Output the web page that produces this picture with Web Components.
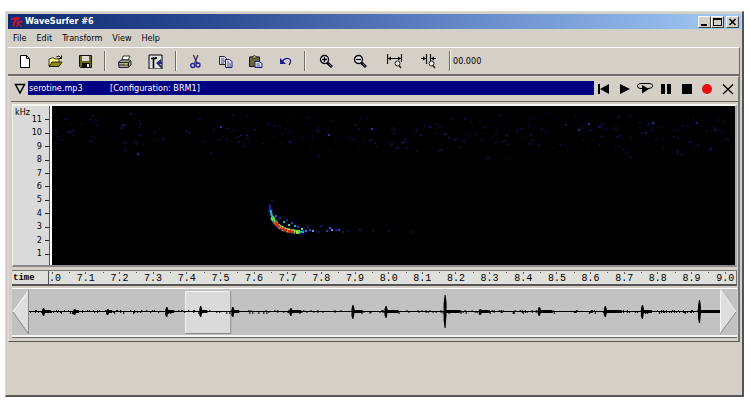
<!DOCTYPE html>
<html lang="en">
<head>
<meta charset="utf-8">
<title>WaveSurfer #6</title>
<style>
body{margin:0;background:#fff;font:9px/12px "DejaVu Sans Condensed","DejaVu Sans",sans-serif;color:#000}
</style>
</head>
<body>
<wave-window>
  <title-bar slot="title">WaveSurfer #6</title-bar>
  <menu-bar slot="menu"></menu-bar>
  <tool-bar slot="tools"></tool-bar>
  <sound-pane slot="pane">
    <transport-bar file="serotine.mp3" configuration="[Configuration: BRM1]"></transport-bar>
    <spectro-gram></spectro-gram>
    <time-ruler></time-ruler>
    <wave-overview></wave-overview>
  </sound-pane>
</wave-window>
<script>
const define = (name, html, setup) => customElements.define(name, class extends HTMLElement {
  constructor() {
    super();
    this.attachShadow({mode: "open"}).innerHTML = `<style>*{box-sizing:border-box}
      :host{display:block;box-sizing:border-box}
      button{font:inherit;color:inherit;background:none;border:0;padding:0;margin:0;display:grid;place-items:center}
      svg{display:block}</style>` + html;
  }
  connectedCallback() { if (setup) setup(this, this.shadowRoot); }
});

/* deterministic noise source, so every load draws the same data */
const random = seed => () => {
  seed = (seed * 1664525 + 1013904223) >>> 0;
  return seed / 4294967296;
};

define("wave-window", `<style>
  :host{margin:11px 6px 0 5px;min-height:calc(100vh - 18px);background:#d4d0c8;
    border:1px solid #dedbd0;border-right:2px solid #50545a;border-bottom:2px solid #585858;
    padding:2px 1px 0 2px;display:flex;flex-direction:column}
</style><slot name="title"></slot><slot name="menu"></slot><slot name="tools"></slot><slot name="pane"></slot>`);

define("title-bar", `<style>
  :host{display:flex;align-items:center;height:15px;padding:0 2px 0 3px;color:#fff;
    background:linear-gradient(90deg,#0f2a72,#2c4b92 28%,#6488c8 62%,#a3cbf5)}
  h1{font:bold 9px/15px "DejaVu Sans Condensed","DejaVu Sans",sans-serif;margin:0 auto 0 2px}
  .b{width:13px;height:12px;background:#d4d0c8;border:1px solid #fff;border-right-color:#404040;border-bottom-color:#404040;color:#000}
  .x{margin-left:2px}
</style>
<svg width="12" height="12" viewBox="0 0 12 12" fill="none" stroke="#d81028" stroke-width="1.8"><path d="M0 3.5L5.5 2Q3 6 2.5 11"/><path d="M8 1Q6 6 6 11M11.5 5L7 7.5L10.5 10.5" stroke-width="1.5"/></svg>
<h1><slot></slot></h1>
<button class="b" aria-label="Minimize"><svg width="9" height="8"><path d="M1 6h6v2H1z"/></svg></button>
<button class="b" aria-label="Maximize"><svg width="9" height="8"><path d="M0 0h9v8H0zM1 2v5h7V2z" fill-rule="evenodd"/></svg></button>
<button class="b x" aria-label="Close"><svg width="9" height="8" stroke="#000" stroke-width="1.5"><path d="M1.500 1L7.500 7M7.500 1L1.500 7"/></svg></button>`);

define("menu-bar", `<style>
  nav{display:flex;gap:10px;padding:0 5px;height:18px;align-items:center}
</style><nav><button>File</button><button>Edit</button><button>Transform</button><button>View</button><button>Help</button></nav>`);

const glass = `<path d="M8 8.500L13 13" stroke="#000" stroke-width="3"/><path d="M9.500 9.500L12.500 12.500" stroke="#55a" stroke-width="1"/><circle cx="5.500" cy="5.500" r="4" fill="#e8e8f0" stroke="#000" stroke-width="1.300"/>`;
const smallGlass = `<circle cx="10.500" cy="9.500" r="2.500" fill="#e8e8e8" stroke="#222"/><path d="M12 11.500L14 14" stroke="#222" stroke-width="1.500"/>`;
const tools = [
  ["New", 30, `<path d="M2.500 1.500h6l3 3v9h-9z" fill="#fff" stroke="#000"/><path d="M8.500 1.500v3h3" fill="none" stroke="#000"/>`],
  ["Open", 30, `<path d="M1 12V5h1l1-1h3l1 1h4v3" fill="#ff9" stroke="#3a3a00"/><path d="M1 12.500L4 8h10l-3 4.500z" fill="#8a8a10" stroke="#222200"/><path d="M8.500 3Q11 .5 13 4M13.500 1.500V4.500H10.500" fill="none" stroke="#000"/>`],
  ["Save", 30, `<path d="M1.500 1.500h12v12h-11l-1-1z" fill="#66661c" stroke="#111"/><path d="M4 2h7v5H4z" fill="#dcdcd4"/><path d="M4 9h8v4H4z" fill="#111"/><path d="M9 10h2v3H9z" fill="#ddd"/>`],
  null,
  ["Print", 31, `<path d="M5 6l1-4h7l-2 4z" fill="#fff" stroke="#333"/><path d="M1.500 8l3-2h8l1.500 1v4l-3 2.500h-9z" fill="#aaa89a" stroke="#222"/><path d="M2 8.500h9.500l2-1.500M11.500 8.500V13M2 11h9" fill="none" stroke="#222"/><path d="M8 10h2" stroke="#dd0"/>`],
  ["Configure", 31, `<path d="M1 1h13v14H1z" fill="#e0e0e0" stroke="#000"/><path d="M5.500 3v11M3 4.500h5M8 3v2" stroke="#000" stroke-width="1.600" fill="none"/><path d="M8 9l5-4v3l-2 1.500 3 2.500v3z" fill="#335"/><path d="M9 9h5" stroke="#24248a" stroke-width="2"/>`],
  null,
  ["Cut", 30, `<path d="M5.500 1L9 9.500M10 1L6.500 9.500" stroke="#335" stroke-width="1.300"/><circle cx="4.800" cy="11.500" r="2" fill="none" stroke="#1c1c98" stroke-width="1.300"/><circle cx="10" cy="11" r="2" fill="none" stroke="#1c1c98" stroke-width="1.300"/>`],
  ["Copy", 30, `<path d="M1.500 2.500h5l2 2v6h-7z" fill="#dedeea" stroke="#223"/><path d="M3 5h3M3 7h4M3 9h3" stroke="#448"/><path d="M7.500 5.500h4l2.500 2v6H7.500z" fill="#e4e4f0" stroke="#1c1c78"/><path d="M9 8h2M9 10h4M9 12h4" stroke="#448"/>`],
  ["Paste", 30, `<path d="M1.500 3h10v9.500h-10z" fill="#66663a" stroke="#111"/><path d="M4 4V2.500h1.500L6.500 1l1 1.500H9V4z" fill="#cc8" stroke="#222" stroke-width=".8"/><path d="M7 7.500h4l3 2v4H7z" fill="#e4e4f0" stroke="#1c1c78"/><path d="M8.500 10h3M8.500 12h4" stroke="#448"/>`],
  ["Undo", 30, `<path d="M4 7.500Q7 3.500 10.500 4.500Q14.500 6 11 11" fill="none" stroke="#1c1c88" stroke-width="1.300"/><path d="M2 4v6h6z" fill="#1c1c88"/>`],
  null,
  ["Zoom in", 34, glass + `<path d="M3 5.500h5M5.500 3v5" stroke="#000" stroke-width="1.300"/>`],
  ["Zoom out", 34, glass + `<path d="M3 5.500h5" stroke="#000" stroke-width="1.300"/>`],
  ["Zoom to selection", 34, `<path d="M.5 0v10M14.500 0v8M1 4.500h13" stroke="#111" stroke-width="1.200"/><path d="M1 4.500l3-2v4zM14 4.500l-3-2v4z"/>` + smallGlass],
  ["Zoom to all", 34, `<path d="M5.500 0v10M9.500 0v7M0 4.500h5M10 4.500h5" stroke="#111" stroke-width="1.200"/><path d="M5 4.500l-3-2v4zM10 4.500l3-2v4z"/>` + smallGlass],
  null
];
define("tool-bar", `<style>
  :host{display:flex;align-items:center;height:29px;margin-right:1px;padding-left:2px;
    border-top:1px solid #fff;border-right:1px solid #666;border-bottom:2px solid #706c70}
  i{width:9px;height:20px;background:linear-gradient(90deg,transparent 4px,#706c68 4px 5px,#f4f2ec 5px 6px,transparent 6px)}
  i:last-of-type{width:8px}
  button{height:24px}
</style>` + tools.map(t => t
  ? `<button style="width:${t[1]}px" aria-label="${t[0]}"><svg width="15" height="15" viewBox="0 0 15 15">${t[2]}</svg></button>`
  : `<i></i>`).join("") + `<output>00.000</output>`);

define("sound-pane", `<style>
  :host{margin:0 1px 0 0;border:1px solid #ddd9d2;border-right:2px solid #777;border-bottom:1px solid #555;padding:0 1px 4px 2px}
</style><slot></slot>`);

define("transport-bar", `<style>
  :host{display:flex;align-items:flex-start;height:25px;padding-top:2px;border-bottom:1px solid #666;margin-right:-1px}
  .name{flex:1;display:grid;grid-template-columns:81px 1fr;background:#000080;color:#fff;height:14px;line-height:14px;padding-left:1px;margin-top:2px}
  .fold{width:17px;height:20px}
  .keys{width:144px;display:grid;grid-template-columns:repeat(7,1fr);height:20px}
</style>
<button class="fold" aria-label="Fold pane"><svg width="12" height="12"><path d="M1.500 1.500h9L6 10z" fill="none" stroke="#000" stroke-width="1.500"/></svg></button>
<div class="name"><span id="f"></span><span id="c"></span></div>
<div class="keys">` + [
  ["To start", `<path d="M2 3h2v10H2zM13 3v10L4 8z"/>`],
  ["Play", `<path d="M3 3l10 5-10 5z"/>`],
  ["Loop", `<path d="M5 7.500H3Q0 7 .5 4.500Q1 2.500 4 2.500h8Q16 2.500 15.500 5.500Q15 7.500 11 7.500" fill="none" stroke="#000"/><path d="M5 4l7 4-7 4.500z"/>`],
  ["Pause", `<path d="M3 3h4v10H3zM9 3h4v10H9z"/>`],
  ["Stop", `<path d="M3 3h10v10H3z"/>`],
  ["Record", `<circle cx="8" cy="8" r="5" fill="#e80c10"/>`],
  ["Close pane", `<path d="M3 3.500l10 9.500M13 3.500L3 13" stroke="#000" stroke-width="1.300"/>`]
].map(k => `<button aria-label="${k[0]}"><svg width="16" height="16" viewBox="0 0 16 16">${k[1]}</svg></button>`).join("") + `</div>`,
(host, root) => {
  root.getElementById("f").textContent = host.getAttribute("file");
  root.getElementById("c").textContent = host.getAttribute("configuration");
});

define("spectro-gram", `<style>
  :host{display:flex;margin:2px 0 0 1px;border-top:2px solid #f6f6f0;border-left:1px solid #f0f0ec;border-right:2px solid #b0aca8;border-bottom:2px solid #888;background:#fff}
  .axis{width:36px;background:#dadada;position:relative;padding:6px 0 5px;display:flex;flex-direction:column}
  .axis span{flex:1;display:flex;align-items:center;justify-content:flex-end;gap:3px}
  .axis span::after{content:"";width:4px;height:1px;background:#222;margin:2px 0 0}
  .axis b{font-weight:normal;position:absolute;left:2px;top:0}
  .plot{flex:1;border-left:1px solid #555;background:#fff;padding-left:2px}
  svg{width:100%;height:159px;background:#000}
</style>
<div class="axis"><b>kHz</b>` + [11,10,9,8,7,6,5,4,3,2,1].map(n => `<span>${n}</span>`).join("") + `</div>
<div class="plot"><svg viewBox="52 106 683 159" preserveAspectRatio="none"></svg></div>`,
(host, root) => {
  const r = random(77);
  const dot = (x, y, w, h, c, o) => `<rect x="${x}" y="${y}" width="${w}" height="${h}" fill="${c}" opacity="${o}"/>`;
  let s = "";
  for (let i = 0; i < 310; i++) {
    const x = Math.round(54 + r() * 678), y = Math.round(109 + (r() + r()) / 2 * 50);
    const o = (0.2 + r() * r() * 0.6).toFixed(2);
    s += dot(x, y, 1 + Math.round(r()), 1 + Math.round(r() * .7), "#2020c0", o);
    if (r() < .4) s += dot(x - 1, y + 1, 3, 1, "#2020a0", .3);
  }
  for (const [x, y] of [[220,126],[578,129],[588,123],[652,122],[371,128],[328,134],[137,153]])
    s += dot(x, y, 2, 2, "#3434e0", .85);
  /* echolocation call: a falling sweep with a fading tail */
  s += `<g fill="none">
    <path d="M270 204V210" stroke="#1030c0" stroke-width="1.5"/>
    <path d="M270 209Q272 220 278 226T306 232" stroke="#1818b0" stroke-width="5" stroke-dasharray="3 1" opacity=".7"/>
    <path d="M270.500 210Q272 219 277 225T304 232" stroke="#30b890" stroke-width="2"/>
    <path d="M272 217Q275 223 280 227T300 232" stroke="#58d840" stroke-width="4" stroke-dasharray="4 1"/>
    <path d="M275 222Q278 226 284 228.500T298 232" stroke="#e8d020" stroke-width="3" stroke-dasharray="2 2"/>
    <path d="M275 222Q279 228 285 230T294 232" stroke="#e02010" stroke-width="2.500" stroke-dasharray="7 1"/>
  </g>`;
  for (const [x, y, c, o] of [[275,215,"#3060ff",.9],[279,217,"#2040e0",.8],[283,221,"#40c0e0",.9],[286,219,"#2030d0",.8],[288,224,"#40d0a0",1],[291,222,"#2048e0",.9],[294,225,"#30a0e0",1],[297,226,"#3040e0",.9],[301,228,"#40e080",1],[305,230,"#3080e0",1],[307,226,"#2020b0",.8],[309,229,"#2848e0",.9],[312,230,"#60a0f0",1],[317,231,"#2020a0",.7],[320,225,"#2020a0",.7],[326,230,"#3040d8",.9],[329,227,"#4060e0",.9],[331,229,"#60a0f0",1],[335,229,"#2828c0",.8],[338,229,"#3848d8",.9],[342,231,"#2020a0",.6],[347,230,"#202090",.5],[359,229,"#202080",.6],[372,230,"#202080",.4],[388,230,"#202080",.5],[412,231,"#202080",.4],[271,200,"#202090",.6],[300,235,"#203060",.6]])
    s += dot(x, y, 2, 2, c, o);
  root.querySelector("svg").innerHTML = s;
});

define("time-ruler", `<style>
  :host{display:flex;height:16px;margin:3px 0 0 1px;border-top:1px solid #777;border-bottom:2px solid #555;background:#dfdfdb;
    font:10px/11px "Liberation Mono",monospace;border-right:1px solid #777}
  b{width:36px;padding:2px 0 0 1px;font-size:9px}
  .cells{flex:1;display:grid;grid-template-columns:20px repeat(20,1fr);margin-right:-6px;text-align:center;border-left:1px solid #555}
  span{padding-top:2px;background:linear-gradient(#555,#555) 50% 1px/1px 2px no-repeat,linear-gradient(#555,#555) 0 1px/1px 1px no-repeat}
  span:first-child{text-align:left;background:linear-gradient(#555,#555) 3px 1px/1px 2px no-repeat}
</style><b>time</b><div class="cells"><span>.0</span>` +
  Array.from({length: 20}, (_, i) => `<span>${((71 + i) / 10).toFixed(1)}</span>`).join("") + `</div>`);

define("wave-overview", `<style>
  :host{display:flex;background:#c2c2c2;margin:2px 0 0 1px;border-top:1px solid #fff;border-bottom:2px solid #f4f4f0;box-shadow:0 1px #666}
  .view{flex:1;width:0;height:46px}
</style>
<button aria-label="Scroll left"><svg width="17" height="46"><path d="M17 1L1 23l16 22z" fill="#dedede"/><path d="M17 1L1 23" stroke="#fff"/><path d="M1 23l15.500 22V1" fill="none" stroke="#888"/></svg></button>
<svg class="view" viewBox="30 289 690 46" preserveAspectRatio="none"></svg>
<button aria-label="Scroll right"><svg width="17" height="46"><path d="M0 1l16 22L0 45z" fill="#dedede"/><path d="M.5 45V1L16 23" fill="none" stroke="#f6f6f6"/><path d="M0 45l16-22" stroke="#888"/></svg></button>`,
(host, root) => {
  const r = random(5);
  let s = `<path d="M186 291h46v43h-46z" fill="#dadada"/><path d="M186.500 334v-42.500H232" fill="none" stroke="#f2f2f2"/><path d="M231.500 291v42.500H186" fill="none" stroke="#888"/>`;
  let d = "M30 311.500H720";
  for (let x = 31; x < 719; x++)
    if (r() < .32) d += `M${x}.5 ${r() < .5 ? 310 : 311}v${r() < .6 ? 2 : 3}`;
  s += `<path d="${d}" stroke="#000" fill="none"/>`;
  for (const [x, up, down, tail] of [[44,4,4,4],[75,3,3,2],[108,3,3,3],[167,5,5,5],[201,6,5,5],[233,5,5,5],[291,4,4,9],[353,7,7,8],[386,6,6,11],[445,17,16,14],[480,3,3,7],[539,5,4,11],[605,6,5,15],[642,7,7,8],[699,12,11,20]])
    s += `<path d="M${x - 1} ${312 - (up >> 1)}l1-${up - (up >> 1)}h1l1 ${up >> 1}V310h${tail}v3h-${tail}l-1 ${down - 1}h-1l-1-${down >> 1}z"/>`;
  root.querySelector(".view").innerHTML = s;
});
</script>
</body>
</html>
